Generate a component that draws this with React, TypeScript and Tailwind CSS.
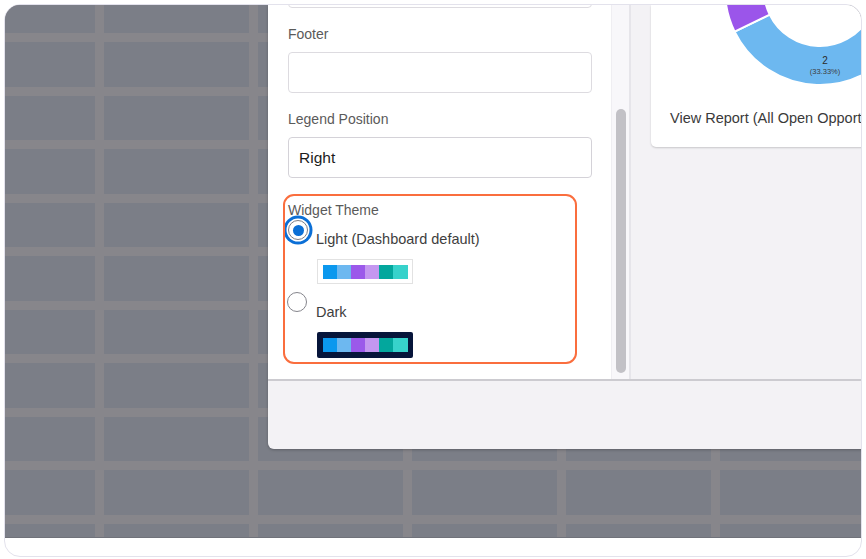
import React from 'react';

// Paleta de colores de los temas (claro y oscuro usan la misma)
const swatchColors = ['bg-[#0b98ee]', 'bg-[#6db8f0]', 'bg-[#9b59ea]', 'bg-[#c497f0]', 'bg-[#03a79d]', 'bg-[#37d2cb]'];

function Swatch({ dark }: { dark?: boolean }) {
  return (
    <div
      className={`ml-px w-[96px] flex items-center justify-center ${
        dark ? 'h-[26px] bg-[#06153a] rounded-[2px]' : 'h-[25px] bg-white border border-[#e2e2e2]'
      }`}
    >
      <div className="flex w-[85px] h-[14px]">
        {swatchColors.map((c) => (
          <div key={c} className={`flex-1 ${c}`} />
        ))}
      </div>
    </div>
  );
}

function Donut() {
  return (
    <svg className="absolute left-0 top-0" width="260" height="100" viewBox="0 0 260 100">
      <path
        d="M 251.27 32.5 A 95 95 0 0 1 83.61 26.65 L 118.67 9.55 A 56 56 0 0 0 217.5 13 Z"
        fill="#6db8f0"
        stroke="#fff"
        strokeWidth="2"
      />
      <path
        d="M 83.61 26.65 A 95 95 0 0 1 152.5 -108.6 L 159.28 -70.15 A 56 56 0 0 0 118.67 9.55 Z"
        fill="#9b55ea"
        stroke="#fff"
        strokeWidth="2"
      />
      <text x="174" y="59" textAnchor="middle" fontSize="10" fill="#2b2b2b" fontFamily="Liberation Sans, Arial, sans-serif">
        2
      </text>
      <text x="174" y="69" textAnchor="middle" fontSize="7.5" fill="#3d3d3d" fontFamily="Liberation Sans, Arial, sans-serif">
        (33.33%)
      </text>
    </svg>
  );
}

export default function App() {
  const cells = Array.from({ length: 77 });

  return (
    <div className="w-[866px] h-[559px] bg-white p-[4px] font-['Liberation_Sans',Arial,sans-serif]">
      <div className="w-[858px] h-[553px] rounded-[16px] border border-[#e3e2ec] overflow-hidden bg-white">
        {/* Captura: fondo con cuadrícula y el diálogo encima */}
        <div className="relative h-[533px] overflow-hidden bg-[#87868b] border-b border-[#70727a]">
          <div className="grid grid-cols-[90px_repeat(6,145px)] grid-rows-[28px_repeat(10,44.5px)] gap-[9px]">
            {cells.map((_, i) => (
              <div key={i} className="bg-[#7b7e87]" />
            ))}
          </div>

          {/* Diálogo de configuración del widget */}
          <div className="absolute left-[263px] top-0 w-[640px] h-[444px] flex flex-col rounded-bl-[6px] overflow-hidden shadow-[0_1px_3px_rgba(0,0,0,0.25)]">
            <div className="flex h-[374px]">
              {/* Columna del formulario */}
              <div className="relative w-[343px] shrink-0 bg-white pl-[20px] pr-[19px]">
                <div className="-mt-[38px] h-[41px] rounded-[4px] border border-[#dddbe0]" />

                <div className="mt-4 text-[14px] leading-5 text-[#5a5a5a]">Footer</div>
                <div className="mt-2 h-[41px] rounded-[4px] border border-[#dddbe0]" />

                <div className="mt-4 text-[14px] leading-5 text-[#5a5a5a]">Legend Position</div>
                <div className="mt-2 h-[41px] rounded-[4px] border border-[#d4d2d8] flex items-center px-[10px] text-[15.5px] text-[#1c1c1c]">
                  Right
                </div>

                <div className="mt-[22px] text-[14px] leading-5 text-[#5a5a5a]">Widget Theme</div>

                <div className="flex">
                  <div className="w-5 h-5 shrink-0 rounded-full border border-[#7d7d85] bg-white flex items-center justify-center ring-[3px] ring-[#0b6fd6] ring-offset-[1.5px]">
                    <div className="w-[11px] h-[11px] rounded-full bg-[#0b6fd6]" />
                  </div>
                  <div className="ml-[8px] pt-[9px]">
                    <div className="text-[14.5px] leading-5 text-[#3e3e3e]">Light (Dashboard default)</div>
                    <div className="mt-[10px]">
                      <Swatch />
                    </div>
                  </div>
                </div>

                <div className="mt-[8px] flex -ml-px">
                  <div className="w-5 h-5 shrink-0 rounded-full border-[1.5px] border-[#85858c] bg-white" />
                  <div className="ml-[9px] pt-[10px]">
                    <div className="text-[14.5px] leading-5 text-[#3e3e3e]">Dark</div>
                    <div className="mt-[10px]">
                      <Swatch dark />
                    </div>
                  </div>
                </div>

                {/* Marco naranja de resaltado */}
                <div className="absolute left-[15px] top-[189px] w-[294px] h-[170px] rounded-[11px] border-[2.5px] border-[#fa6e3e]" />
              </div>

              {/* Barra de desplazamiento */}
              <div className="w-[18px] shrink-0 bg-[#f8f7fa] border-l border-[#efeef2] pl-[4px] pt-[104px]">
                <div className="w-[10px] h-[264px] rounded-full bg-[#c2c1c6]" />
              </div>
              <div className="w-[2px] shrink-0 bg-[#e6e5ea]" />

              {/* Vista previa del widget */}
              <div className="flex-1 min-w-0 bg-[#f3f2f5] pl-[20px]">
                <div className="relative h-[142px] w-[260px] bg-white rounded-bl-[5px] shadow-[0_1px_2px_rgba(0,0,0,0.18)] flex flex-col justify-end pl-[19px] pb-[19px]">
                  <Donut />
                  <div className="relative whitespace-nowrap text-[14.5px] leading-5 text-[#3a3a3a]">
                    View Report (All Open Opportunities)
                  </div>
                </div>
              </div>
            </div>

            <div className="h-[2px] bg-[#cccbd0]" />
            <div className="h-[68px] bg-[#f3f2f5]" />
          </div>
        </div>
      </div>
    </div>
  );
}
